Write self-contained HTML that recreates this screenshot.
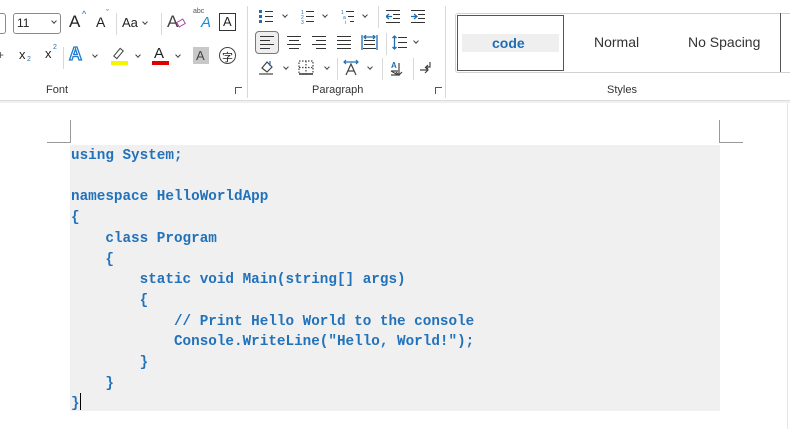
<!DOCTYPE html>
<html><head><meta charset="utf-8">
<style>
*{margin:0;padding:0;box-sizing:border-box}
body{width:790px;height:429px;overflow:hidden;background:#fff;position:relative;font-family:"Liberation Sans",sans-serif;color:#222}
.a{position:absolute}
.t{position:absolute;white-space:nowrap}
.ch{position:absolute;width:5px;height:5px;border-right:1.2px solid #444;border-bottom:1.2px solid #444;transform:rotate(45deg)}
.sep{position:absolute;width:1px;background:#d8d8d8}
.lbl{position:absolute;font-size:11px;color:#333}
.code{position:absolute;left:71px;top:146px;font-family:"Liberation Mono",monospace;font-weight:bold;font-size:14.3px;line-height:20.7px;color:#2272bb;white-space:pre}
</style></head><body>
<div class="a" style="left:0;top:0;width:790px;height:101px;background:#fff;border-bottom:1px solid #dcdcdc"></div>
<div class="a" style="left:0;top:101px;width:790px;height:2px;background:#f0f0f0"></div>
<div class="a" style="left:787px;top:103px;width:1px;height:326px;background:#e6e6e6"></div>

<div class="a" style="left:-6px;top:13px;width:12px;height:21px;border:1px solid #8a8a8a;border-radius:3px"></div>
<div class="a" style="left:13px;top:13px;width:48px;height:21px;border:1px solid #8a8a8a;border-radius:3px"></div>
<div class="t" style="left:17px;top:16px;font-size:12px">11</div>
<div class="ch" style="left:52px;top:19px;width:4px;height:4px"></div>
<div class="t" style="left:69px;top:12px;font-size:17px">A</div><div class="t" style="left:82px;top:9px;font-size:9px;color:#1f6db5">^</div>
<div class="t" style="left:96px;top:14px;font-size:14px">A</div><div class="t" style="left:106px;top:8px;font-size:9px;color:#1f6db5">ˇ</div>
<div class="sep" style="left:116px;top:13px;height:22px"></div>
<div class="t" style="left:122px;top:15px;font-size:13px">Aa</div><div class="ch" style="left:143px;top:20px;width:4px;height:4px"></div>
<div class="sep" style="left:161px;top:13px;height:22px"></div>
<div class="t" style="left:167px;top:12px;font-size:17px;color:#444">A</div><div class="a" style="left:177px;top:20px;width:8px;height:6px;border:1.5px solid #a64ca6;transform:rotate(-30deg)"></div>
<div class="t" style="left:193px;top:8px;font-size:7px;color:#555">abc</div><div class="t" style="left:201px;top:14px;font-size:15px;color:#1f8ad6;font-style:italic">A</div>
<div class="a" style="left:219px;top:13px;width:17px;height:18px;border:1.3px solid #333"></div><div class="t" style="left:223px;top:14px;font-size:13px">A</div>

<div class="t" style="left:-3px;top:48px;font-size:12px;color:#555">+</div>
<div class="t" style="left:19px;top:47px;font-size:13px">x</div><div class="t" style="left:27px;top:56px;font-size:7px;color:#1f6db5">2</div>
<div class="t" style="left:45px;top:46px;font-size:13px">x</div><div class="t" style="left:53px;top:44px;font-size:7px;color:#1f6db5">2</div>
<div class="sep" style="left:63px;top:47px;height:22px"></div>
<div class="t" style="left:69px;top:44px;font-size:18px;font-weight:bold;color:#fff;-webkit-text-stroke:1.3px #1f7ad0">A</div><div class="ch" style="left:93px;top:53px;width:4px;height:4px"></div>
<div class="a" style="left:116px;top:48px;width:5px;height:11px;border:1.3px solid #444;transform:rotate(40deg)"></div>
<div class="a" style="left:111px;top:61px;width:17px;height:4px;background:#f5f500"></div><div class="ch" style="left:136px;top:53px;width:4px;height:4px"></div>
<div class="t" style="left:154px;top:45px;font-size:15px">A</div><div class="a" style="left:152px;top:61px;width:17px;height:4px;background:#e00000"></div><div class="ch" style="left:176px;top:53px;width:4px;height:4px"></div>
<div class="a" style="left:193px;top:47px;width:16px;height:17px;background:#c8c8c8"></div><div class="t" style="left:196px;top:48px;font-size:13px;color:#444">A</div>
<div class="a" style="left:219px;top:47px;width:17px;height:17px;border:1.3px solid #444;border-radius:50%"></div><div class="t" style="left:222px;top:49px;font-size:11px;font-family:'Noto Sans CJK SC',sans-serif">字</div>
<div class="lbl" style="left:46px;top:84px">Font</div>
<div class="a" style="left:235px;top:87px;width:7px;height:7px;border-left:1px solid #555;border-top:1px solid #555"></div>
<div class="sep" style="left:247px;top:6px;height:92px"></div>

<div class="a" style="left:259px;top:9px"><svg width="120" height="16"><g fill="#1f6db5"><rect x="0" y="1" width="3" height="3"/><rect x="0" y="6" width="3" height="3"/><rect x="0" y="11" width="3" height="3"/></g><g stroke="#333"><path d="M6 2.5h8M6 7.5h8M6 12.5h8M47 2.5h8M47 7.5h8M47 12.5h8M87 2.5h8M89 7.5h6M91 12.5h4"/></g><g fill="#1f6db5" font-size="5" font-family="Liberation Sans"><text x="42" y="5">1</text><text x="42" y="10">2</text><text x="42" y="15">3</text><text x="82" y="5">1</text><text x="84" y="10">a</text><text x="86" y="15">i</text></g></svg></div>
<div class="ch" style="left:283px;top:13px;width:4px;height:4px"></div>
<div class="ch" style="left:323px;top:13px;width:4px;height:4px"></div>
<div class="ch" style="left:363px;top:13px;width:4px;height:4px"></div>
<div class="sep" style="left:378px;top:6px;height:22px"></div>
<div class="a" style="left:386px;top:9px"><svg width="42" height="16"><g stroke="#333"><path d="M0 1.5h14M7 5.5h7M7 9.5h7M0 13.5h14M25 1.5h14M32 5.5h7M32 9.5h7M25 13.5h14"/></g><g stroke="#1f6db5" fill="none" stroke-width="1.3"><path d="M6 7.5H0M3 5L0 7.5 3 10M25 7.5h6M28 5l3 2.5-3 2.5"/></g></svg></div>
<div class="a" style="left:255px;top:31px;width:24px;height:23px;border:1.3px solid #777;border-radius:4px;background:#eee"></div>
<div class="a" style="left:260px;top:35px"><svg width="125" height="16"><g stroke="#333"><path d="M0 1.5h14M0 5.5h10M0 9.5h14M0 13.5h10M27 1.5h14M29 5.5h10M27 9.5h14M29 13.5h10M52 1.5h14M56 5.5h10M52 9.5h14M56 13.5h10M77 1.5h14M77 5.5h14M77 9.5h14M77 13.5h14M104 5.5h11M104 9.5h11M103 13.5h13"/></g><g stroke="#1f6db5" fill="none" stroke-width="1.3"><path d="M102 0v15M117 0v15M104 2h11M106 0l-2 2 2 2M113 0l2 2-2 2"/></g></svg></div>
<div class="sep" style="left:386px;top:33px;height:22px"></div>
<div class="a" style="left:392px;top:35px"><svg width="16" height="16"><g stroke="#333"><path d="M6 2.5h9M6 7.5h9M6 12.5h9"/></g><g stroke="#1f6db5" fill="none" stroke-width="1.3"><path d="M2.5 1v13M0.5 3l2-2 2 2M0.5 12l2 2 2-2"/></g></svg></div>
<div class="ch" style="left:414px;top:39px;width:4px;height:4px"></div>
<div class="a" style="left:259px;top:59px"><svg width="180" height="18"><g stroke="#444" fill="none" stroke-width="1.2"><path d="M3 9l5-6 5 5-5 5z"/><path d="M0 15h14"/><rect x="40" y="2" width="14" height="13" stroke-dasharray="1.5 1.5"/><path d="M40 15h14" stroke-width="1.6"/><path d="M47 2v13M40 8.5h14" stroke-dasharray="1.5 1.5"/><path d="M87 16l5-11 5 11M89 12h6"/><path d="M132 12l7 0M132 16h7l-7-4"/><path d="M140 4v12M137 13l3 3 3-3"/><path d="M161 11h8M166 8l3 3-3 3M171 3v5h-4M169 6l-2 2 2 2"/></g><g stroke="#1f6db5" fill="none" stroke-width="1.2"><path d="M11 2v5"/><path d="M85 3h14M87 1l-2 2 2 2M97 1l2 2-2 2"/></g><text x="132" y="9" font-size="8" font-family="Liberation Sans" fill="#1f6db5" font-weight="bold">A</text></svg></div>
<div class="ch" style="left:284px;top:65px;width:4px;height:4px"></div>
<div class="ch" style="left:325px;top:65px;width:4px;height:4px"></div>
<div class="sep" style="left:337px;top:58px;height:22px"></div>
<div class="ch" style="left:368px;top:65px;width:4px;height:4px"></div>
<div class="sep" style="left:382px;top:58px;height:22px"></div>
<div class="sep" style="left:413px;top:58px;height:22px"></div>
<div class="lbl" style="left:312px;top:84px">Paragraph</div>
<div class="a" style="left:435px;top:87px;width:7px;height:7px;border-left:1px solid #555;border-top:1px solid #555"></div>
<div class="sep" style="left:445px;top:6px;height:92px"></div>

<div class="a" style="left:455px;top:13px;width:340px;height:60px;border:1px solid #d0d0d0;border-radius:3px"></div>
<div class="a" style="left:457px;top:15px;width:107px;height:56px;border:1.3px solid #555"></div>
<div class="a" style="left:462px;top:34px;width:97px;height:18px;background:#efefef"></div>
<div class="t" style="left:492px;top:35px;font-size:14px;font-weight:bold;color:#1f6db5">code</div>
<div class="t" style="left:594px;top:34px;font-size:14px;color:#333">Normal</div>
<div class="t" style="left:688px;top:34px;font-size:14px;color:#333">No Spacing</div>
<div class="a" style="left:780px;top:13px;width:1px;height:59px;background:#555"></div>
<div class="lbl" style="left:607px;top:84px">Styles</div>

<div class="a" style="left:70px;top:120px;width:1px;height:23px;background:#999"></div>
<div class="a" style="left:47px;top:142px;width:23px;height:1px;background:#999"></div>
<div class="a" style="left:719px;top:120px;width:1px;height:23px;background:#999"></div>
<div class="a" style="left:719px;top:142px;width:24px;height:1px;background:#999"></div>
<div class="a" style="left:70px;top:145px;width:650px;height:266px;background:#f0f0f0"></div>
<div class="code">using System;

namespace HelloWorldApp
{
    class Program
    {
        static void Main(string[] args)
        {
            // Print Hello World to the console
            Console.WriteLine("Hello, World!");
        }
    }
}</div>
<div class="a" style="left:80px;top:393px;width:1px;height:17px;background:#000"></div>
</body></html>
